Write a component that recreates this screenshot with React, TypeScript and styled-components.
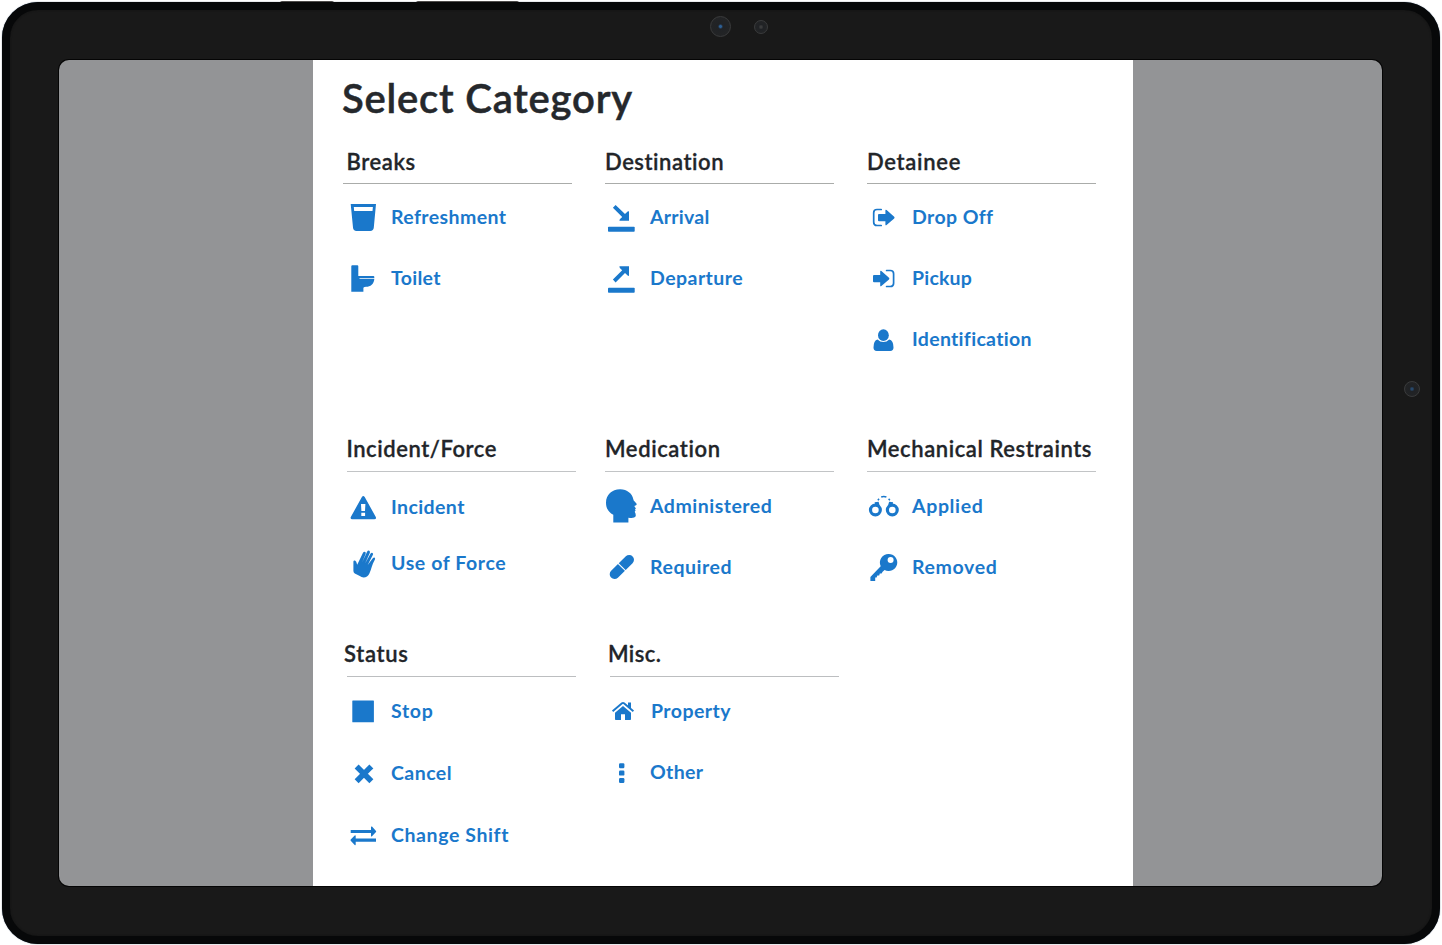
import React from 'react';
import styled, { createGlobalStyle } from 'styled-components';

const BLUE = '#1a78cb';

const GlobalStyle = createGlobalStyle`
  * { box-sizing: border-box; }
  body { margin: 0; background: #fff; font-family: Lato, 'Open Sans', sans-serif; overflow: hidden; }
`;

const Stage = styled.div`
  position: relative;
  width: 1442px;
  height: 945px;
  padding: 2px 2px 1px;
`;

const SideButton = styled.i<{ $x: number; $w: number }>`
  position: absolute;
  top: 1px;
  left: ${(p) => p.$x}px;
  width: ${(p) => p.$w}px;
  height: 3px;
  border-radius: 2px 2px 0 0;
  background: #55504c;
`;

const Tablet = styled.div`
  position: relative;
  width: 1438px;
  height: 942px;
  padding: 50px 49px;
  border: 8px solid #070809;
  border-radius: 36px;
  background: #191919;
  box-shadow: inset 0 0 2px #111, 0 0 1px #0a2340;
`;

const Lens = styled.span<{ $x: number; $y: number; $size: number; $dot: string }>`
  position: absolute;
  left: ${(p) => p.$x}px;
  top: ${(p) => p.$y}px;
  width: ${(p) => p.$size}px;
  height: ${(p) => p.$size}px;
  border-radius: 50%;
  border: 1px solid #3a3b3c;
  background: radial-gradient(circle, ${(p) => p.$dot} 0 1px, #202225 2.5px, #242526 100%);
`;

const Screen = styled.div`
  display: flex;
  justify-content: center;
  width: 1323px;
  height: 826px;
  border-radius: 10px;
  overflow: hidden;
  background: #939496;
  box-shadow: 0 0 0 1px #050505;
`;

const Panel = styled.main`
  width: 820px;
  height: 100%;
  margin-left: 5px;
  background: #fff;
`;

const Title = styled.h1`
  margin: 0;
  height: 80px;
  padding: 14px 0 0 29px;
  font-size: 40px;
  line-height: 48px;
  font-weight: 600;
  letter-spacing: 0.8px;
  -webkit-text-stroke: 0.5px currentColor;
  color: #25282c;
  white-space: nowrap;
`;

const Row = styled.section<{ $height: number }>`
  display: grid;
  grid-template-columns: 259px 262px 260px;
  height: ${(p) => p.$height}px;
  padding-left: 34px;
`;

const Group = styled.div`
  display: flex;
  flex-direction: column;
`;

const Heading = styled.h2<{ $shift: number; $text: number; $line: number; $track: number; $rule: string }>`
  margin: 0 0 0 ${(p) => p.$shift}px;
  text-indent: ${(p) => p.$text}px;
  width: 229px;
  height: 44px;
  line-height: ${(p) => p.$line}px;
  font-size: 22px;
  font-weight: 600;
  letter-spacing: ${(p) => p.$track}px;
  -webkit-text-stroke: 0.3px currentColor;
  color: #222529;
  white-space: nowrap;
  border-bottom: 1px solid ${(p) => p.$rule};
`;

const List = styled.ul<{ $top: number }>`
  list-style: none;
  margin: 0;
  padding: ${(p) => p.$top}px 0 0;
`;

const Item = styled.li<{ $pitch: number; $gap: number }>`
  display: flex;
  align-items: center;
  gap: ${(p) => p.$gap}px;
  height: ${(p) => p.$pitch}px;
  color: ${BLUE};
`;

const Glyph = styled.svg`
  flex: none;
  width: 32px;
  height: 36px;
  fill: currentColor;
`;

const Label = styled.span<{ $track: number }>`
  font-size: 19.5px;
  line-height: 24px;
  font-weight: 700;
  letter-spacing: ${(p) => p.$track}px;
  white-space: nowrap;
`;

const icons: Record<string, React.ReactNode> = {
  cup: <path fillRule="evenodd" d="M3.7 5H29L26.8 28.6Q26.5 32 23.2 32H9.6Q6.2 32 6 28.6ZM6.8 8 7.2 12H25.5L25.9 8Z" />,
  toilet: <path d="M4.3 6.3q0-1 1-1h5q1 0 1 1V16h15.2q.8 0 .8.9v1.3H12.5v.8H27.3C27 24 23.5 26.8 19 26.8q-3 .2-2.6 2V31.7H4.3Z" />,
  arrival: (
    <>
      <rect x="2" y="27.7" width="26.7" height="5" rx=".8" />
      <path d="M9.6 5.9 19 15.1 21.6 12.6 23 12.2V21.7H13.4L13.8 20.2 16.2 17.9 6.9 8.7Z" />
    </>
  ),
  departure: (
    <>
      <rect x="2" y="27.8" width="26.7" height="5" rx=".8" />
      <path d="M9.6 22.4 19 13.1 21.6 15.6 23 16V6.3H13.4L13.8 7.9 16.2 10.3 6.9 19.6Z" />
    </>
  ),
  dropoff: (
    <>
      <path d="M13.2 10.5H9Q5.7 10.5 5.7 13.8V23.2Q5.7 26.5 9 26.5H13.2" fill="none" stroke="currentColor" strokeWidth="1.7" strokeLinecap="round" />
      <path d="M10 16q0-1 1-1h6.4v-3.4q0-1.5 1.2-.6L26.2 17.7q.8.9 0 1.7L18.6 26q-1.2.9-1.2-.6v-3.1H11q-1 0-1-1Z" />
    </>
  ),
  pickup: (
    <>
      <path d="M18.6 10.5H22.3Q25.6 10.5 25.6 13.8V23.2Q25.6 26.5 22.3 26.5H18.6" fill="none" stroke="currentColor" strokeWidth="1.7" strokeLinecap="round" />
      <path d="M5 16q0-1 1-1h6.2v-3.4q0-1.5 1.2-.6L21 17.7q.8.9 0 1.7L13.4 26q-1.2.9-1.2-.6v-3.1H6q-1 0-1-1Z" />
    </>
  ),
  person: (
    <>
      <ellipse cx="15.4" cy="14.2" rx="5.4" ry="5.9" />
      <path d="M9.6 18.4Q12 20.9 15.4 20.9T21.2 18.4Q25.5 19.2 25.5 26.6 25.5 30 22.2 30H8.8Q5.5 30 5.5 26.6 5.5 19.2 9.6 18.4Z" />
    </>
  ),
  warning: <path fillRule="evenodd" d="M14.9 8q1.4-2 2.8 0L28.8 28q.8 2.2-1.5 2.3H5.3Q3 30.2 3.8 28ZM14 15 14.4 22H18L18.4 15ZM14.3 23.7V27.1H18.1V23.7Z" />,
  hand: <path d="M6.4 16.6Q6.6 15.3 8 15.6 9.4 16.2 10.2 19.7L16 7.8Q16.9 6.3 18.2 6.9 19.2 7.5 18.6 9L15.2 17.3 20.2 6.6Q21 5.2 22.3 5.8 23.4 6.5 22.8 8L18.2 18.3 23.6 8.6Q24.5 7.3 25.6 8 26.5 8.8 25.8 10.1L20.7 19.9 26 13Q27 12 27.8 12.7 28.5 13.5 27.8 14.7C25 19.5 24.4 24 22.4 28.4Q20.5 32.4 16.6 32.6 14.4 32.5 12.8 31.1L7.8 28.4Q6.5 27.6 6.4 26Z" />,
  head: <path d="M14 1.3C21 1.2 26.2 5.5 27.4 11.5Q27.6 13.1 28.7 13.6L30.6 15.8Q31 16.8 29.5 17.5L28.3 18.1 29.9 20.4 29 21.5 29.6 22.5 28.7 23.8Q30.3 26.5 29.5 28.6 28.5 30.5 22.4 29.7V34.6H7.3V26.8C2.3 24 0 20 0 14.7 0 7 6 1.4 14 1.3Z" />,
  pill: (
    <>
      <path d="M8.5 25.2 23.2 10.8" stroke="currentColor" strokeWidth="9.6" strokeLinecap="round" />
      <path d="M11.3 13.6 20.5 22.7" stroke="#fff" strokeWidth="1.1" />
    </>
  ),
  cuffs: (
    <>
      <circle cx="7.4" cy="22" r="4.9" fill="none" stroke="currentColor" strokeWidth="3.2" />
      <circle cx="24.3" cy="22" r="4.9" fill="none" stroke="currentColor" strokeWidth="3.2" />
      <path d="M6.6 14.2 10.6 13.8 11.8 18 7.2 17ZM25.1 14.2 21.1 13.8 19.9 18 24.5 17Z" />
      <path d="M9.8 12.2 11.1 10.9M13.2 9Q15.8 8 18.4 9M20.6 10.9 21.9 12.2" fill="none" stroke="currentColor" strokeWidth="1.5" />
    </>
  ),
  key: (
    <path
      fillRule="evenodd"
      d="M20.6 5A8.5 8.5 0 1 1 16.6 20.9L14.6 22.8 13.6 24.6H11.8L11.2 26.6H9.3L8.6 28.6H7.2V31.9H2.4V27.9L12.7 17.2A8.5 8.5 0 0 1 20.6 5ZM22.6 8.1A3 3 0 1 0 22.6 14.1 3 3 0 1 0 22.6 8.1Z"
    />
  ),
  stop: <rect x="5.3" y="7.6" width="21.6" height="21.6" rx=".5" />,
  cross: <path d="M11.6 13.4 22.4 24.3M22.4 13.4 11.6 24.3" stroke="currentColor" strokeWidth="5.6" strokeLinecap="square" />,
  swap: (
    <path d="M3.7 12.9H24V10Q24.2 9.1 25 9.6L29 13.9Q29.4 14.5 29 15L25 19.3Q24.2 19.8 24 18.9V16.1H3.7ZM29 21.6H8.7V18.7Q8.5 17.9 7.7 18.4L3.7 22.6Q3.3 23.2 3.7 23.8L7.7 27.9Q8.5 28.5 8.7 27.6V24.8H29Z" />
  ),
  house: (
    <>
      <path d="M17 13.1 25 19.8V26.2Q25 27 24.2 27H19V21.2H15V27H9.8Q9 27 9 26.2V19.8Z" />
      <path d="M6.6 18.2 16 10.3Q17 9.6 18 10.3L27.4 18.2" fill="none" stroke="currentColor" strokeWidth="1.9" />
      <path d="M22 9.5H25V16L22 13.4Z" />
    </>
  ),
  dots: (
    <>
      <rect x="13" y="9.3" width="5.4" height="5" rx="1.2" />
      <rect x="13" y="16.6" width="5.4" height="5" rx="1.2" />
      <rect x="13" y="24" width="5.4" height="5" rx="1.2" />
    </>
  ),
};

type Entry = { icon: string; text: string; track: number; gap?: number };
type GroupData = {
  name: string;
  track: number;
  shift?: number;
  inset?: number;
  top: number;
  pitch: number;
  items: Entry[];
};

const rows: { height: number; rule: string; line: number; groups: GroupData[] }[] = [
  {
    height: 288,
    rule: '#aaacaa',
    line: 43,
    groups: [
      { name: 'Breaks', track: 0.6, shift: -4, inset: 3.5, top: 2.5, pitch: 61, items: [
        { icon: 'cup', text: 'Refreshment', track: 0.4 },
        { icon: 'toilet', text: 'Toilet', track: 0.3 },
      ] },
      { name: 'Destination', track: 0.55, shift: -1, top: 2.5, pitch: 61, items: [
        { icon: 'arrival', text: 'Arrival', track: 0.25 },
        { icon: 'departure', text: 'Departure', track: 0.45 },
      ] },
      { name: 'Detainee', track: 0.7, shift: -1, top: 2.5, pitch: 61, items: [
        { icon: 'dropoff', text: 'Drop Off', track: 0.4 },
        { icon: 'pickup', text: 'Pickup', track: 0.2 },
        { icon: 'person', text: 'Identification', track: 0.3 },
      ] },
    ],
  },
  {
    height: 205,
    rule: '#c2c4c6',
    line: 41,
    groups: [
      { name: 'Incident/Force', track: 0.55, inset: -0.5, top: 7, pitch: 56, items: [
        { icon: 'warning', text: 'Incident', track: 0.4 },
        { icon: 'hand', text: 'Use of Force', track: 0.6 },
      ] },
      { name: 'Medication', track: 0.6, shift: -1, top: 3.5, pitch: 61, items: [
        { icon: 'head', text: 'Administered', track: 0.5 },
        { icon: 'pill', text: 'Required', track: 0.55 },
      ] },
      { name: 'Mechanical Restraints', track: 0.57, shift: -1, top: 3.5, pitch: 61, items: [
        { icon: 'cuffs', text: 'Applied', track: 0.65 },
        { icon: 'key', text: 'Removed', track: 0.65 },
      ] },
    ],
  },
  {
    height: 252,
    rule: '#bcbec0',
    line: 41,
    groups: [
      { name: 'Status', track: 0.7, inset: -3, top: 3, pitch: 62, items: [
        { icon: 'stop', text: 'Stop', track: 0.7 },
        { icon: 'cross', text: 'Cancel', track: 0.45 },
        { icon: 'swap', text: 'Change Shift', track: 0.6 },
      ] },
      { name: 'Misc.', track: 0.4, shift: 4, inset: -2, top: 3.5, pitch: 61, items: [
        { icon: 'house', text: 'Property', track: 0.45, gap: 13 },
        { icon: 'dots', text: 'Other', track: 0.35 },
      ] },
    ],
  },
];

export default function App() {
  return (
    <Stage>
      <GlobalStyle />
      <SideButton $x={280} $w={54} />
      <SideButton $x={416} $w={103} />
      <Tablet>
        <Lens $x={700} $y={6} $size={21} $dot="#2d5f94" />
        <Lens $x={744} $y={10} $size={14} $dot="#3a3b3c" />
        <Lens $x={1394} $y={371} $size={16} $dot="#27486b" />
        <Screen>
          <Panel>
            <Title>Select Category</Title>
            {rows.map((row, i) => (
              <Row key={i} $height={row.height}>
                {row.groups.map((g) => (
                  <Group key={g.name}>
                    <Heading
                      $shift={g.shift ?? 0}
                      $text={g.inset ?? 0}
                      $line={row.line}
                      $track={g.track}
                      $rule={row.rule}
                    >
                      {g.name}
                    </Heading>
                    <List $top={g.top}>
                      {g.items.map((item) => (
                        <Item key={item.text} $pitch={g.pitch} $gap={item.gap ?? 12}>
                          <Glyph viewBox="0 0 32 36">{icons[item.icon]}</Glyph>
                          <Label $track={item.track}>{item.text}</Label>
                        </Item>
                      ))}
                    </List>
                  </Group>
                ))}
              </Row>
            ))}
          </Panel>
        </Screen>
      </Tablet>
    </Stage>
  );
}
